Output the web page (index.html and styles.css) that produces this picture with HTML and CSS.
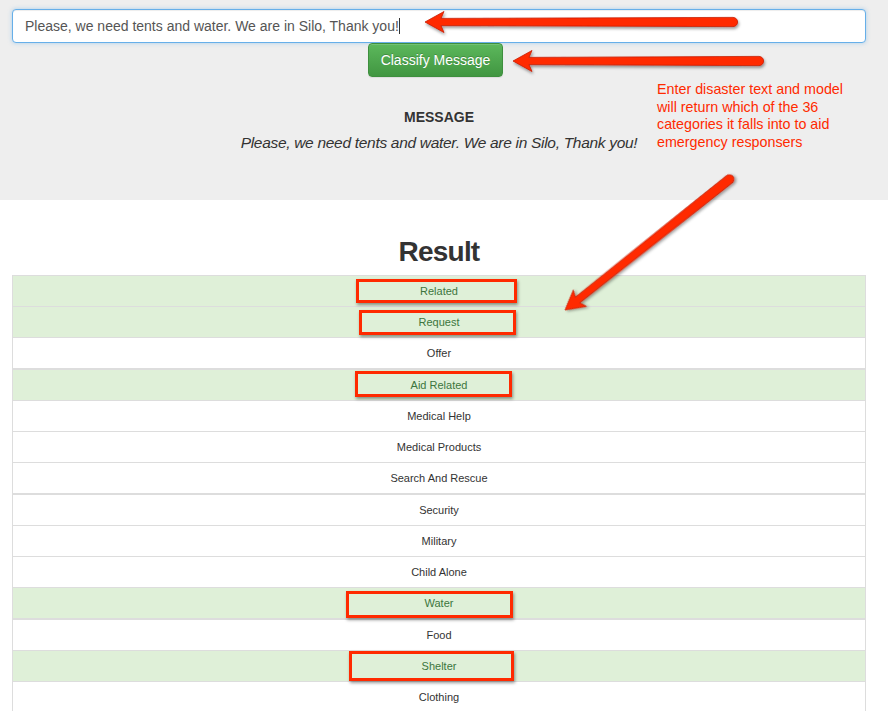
FILE: index.html
```html
<!DOCTYPE html>
<html>
<head>
<meta charset="utf-8">
<link rel="stylesheet" href="styles.css">
</head>
<body>
<div class="page">
  <section class="jumbotron">
    <div class="container">
      <form class="classify-form">
        <div class="input">Please, we need tents and water. We are in Silo, Thank you!<span class="caret"></span></div>
        <div class="btn-row"><button type="button" class="btn-success">Classify Message</button></div>
      </form>
      <div class="message">
        <h4 class="message-title">MESSAGE</h4>
        <p class="message-text">Please, we need tents and water. We are in Silo, Thank you!</p>
      </div>
    </div>
  </section>

  <section class="container results">
    <h2 class="result-title">Result</h2>
    <table class="table">
      <tbody>
        <tr class="success"><td>Related</td></tr>
        <tr class="success"><td>Request</td></tr>
        <tr><td>Offer</td></tr>
      </tbody>
      <tbody>
        <tr class="success"><td>Aid Related</td></tr>
        <tr><td>Medical Help</td></tr>
        <tr><td>Medical Products</td></tr>
        <tr><td>Search And Rescue</td></tr>
      </tbody>
      <tbody>
        <tr><td>Security</td></tr>
        <tr><td>Military</td></tr>
        <tr><td>Child Alone</td></tr>
        <tr class="success"><td>Water</td></tr>
      </tbody>
      <tbody>
        <tr><td>Food</td></tr>
        <tr class="success"><td>Shelter</td></tr>
        <tr><td>Clothing</td></tr>
      </tbody>
    </table>
  </section>

  <p class="note">Enter disaster text and model will return which of the 36 categories it falls into to aid emergency responsers</p>

  <div class="box box-related"></div>
  <div class="box box-request"></div>
  <div class="box box-aid"></div>
  <div class="box box-water"></div>
  <div class="box box-shelter"></div>

  <svg class="arrows" width="888" height="711" viewBox="0 0 888 711">
    <defs>
      <filter id="sh" x="-20%" y="-50%" width="140%" height="200%">
        <feDropShadow dx="1" dy="2" stdDeviation="1.6" flood-color="#000" flood-opacity="0.4"/>
      </filter>
    </defs>
    <g transform="translate(425,22)" filter="url(#sh)">
      <path class="arrow" d="M0,0 L19,-10.5 L16,-3.6 L308,-4.6 A4.6,4.6 0 0 1 308,4.6 L16,3.6 L19,10.5 Z"/>
    </g>
    <g transform="translate(513,61)" filter="url(#sh)">
      <path class="arrow" d="M0,0 L19,-10.5 L16,-3.6 L246,-4.6 A4.6,4.6 0 0 1 246,4.6 L16,3.6 L19,10.5 Z"/>
    </g>
    <g transform="translate(565,310) rotate(-38.5)" filter="url(#sh)">
      <path class="arrow" d="M0,0 L19,-10.5 L16,-3.6 L210,-4.6 A4.6,4.6 0 0 1 210,4.6 L16,3.6 L19,10.5 Z"/>
    </g>
  </svg>
</div>
</body>
</html>
```

FILE: styles.css
```css
* { box-sizing: border-box; }
html, body { margin: 0; padding: 0; background: #fff; }
body {
  font-family: "Liberation Sans", Arial, Helvetica, sans-serif;
  color: #333;
  width: 888px;
  height: 711px;
  overflow: hidden;
}
.page { position: relative; width: 888px; height: 711px; }

.jumbotron {
  background: #eeeeee;
  height: 200px;
  padding-top: 9px;
}
.container {
  margin-left: 12px;
  width: 854px;
}

.input {
  height: 34px;
  border: 1px solid #66afe9;
  border-radius: 4px;
  background: #fff;
  box-shadow: inset 0 1px 1px rgba(0,0,0,.075), 0 0 4px rgba(102,175,233,.5);
  padding: 0 12px;
  font-size: 14px;
  line-height: 32px;
  color: #555;
  white-space: nowrap;
}
.caret {
  display: inline-block;
  width: 1px;
  height: 16px;
  background: #333;
  vertical-align: -3px;
}

.btn-row {
  display: flex;
  justify-content: center;
  padding-right: 7px;
}
.btn-success {
  height: 34px;
  width: 135px;
  padding: 0;
  border: 1px solid #3e8f3e;
  border-radius: 4px;
  background: linear-gradient(to bottom, #5cb85c 0%, #419641 100%);
  box-shadow: inset 0 1px 0 rgba(255,255,255,.15), 0 1px 1px rgba(0,0,0,.075);
  color: #fff;
  font-family: "Liberation Sans", Arial, sans-serif;
  font-size: 14px;
  line-height: 32px;
  text-shadow: 0 -1px 0 rgba(0,0,0,.2);
}

.message { text-align: center; padding-top: 30px; }
.message-title {
  margin: 0;
  font-size: 14px;
  line-height: 20px;
  font-weight: bold;
  color: #333;
}
.message-text {
  margin: 5px 0 0;
  font-size: 15.5px;
  line-height: 22px;
  font-style: italic;
  color: #333;
  letter-spacing: -0.3px;
}

.results { padding-top: 35px; }
.result-title {
  margin: 0 0 6px;
  text-align: center;
  font-size: 28px;
  line-height: 34px;
  font-weight: bold;
  letter-spacing: -0.8px;
  color: #333;
}

.table {
  width: 854px;
  border-collapse: collapse;
  border: 1px solid #ddd;
  font-size: 11px;
}
.table td {
  height: 31px;
  padding: 0;
  border-top: 1px solid #ddd;
  text-align: center;
  vertical-align: middle;
  color: #333;
  background: #fff;
}
.table tbody + tbody { border-top: 2px solid #ddd; }
.table tbody + tbody tr:first-child td { border-top: 2px solid #ddd; height: 32px; }
.table tr.success td { background: #dff0d8; color: #3c763d; }

.note {
  position: absolute;
  left: 657px;
  top: 81px;
  width: 200px;
  margin: 0;
  font-size: 14.3px;
  line-height: 17.7px;
  color: #ff2a00;
}

.box {
  position: absolute;
  border: 3px solid #ff2a00;
  box-shadow: 1px 2px 3px rgba(0,0,0,.4);
}
.box-related { left: 356px; top: 279px; width: 161px; height: 24px; }
.box-request { left: 359px; top: 310px; width: 157px; height: 25px; }
.box-aid { left: 355px; top: 371px; width: 157px; height: 26px; }
.box-water { left: 346px; top: 591px; width: 167px; height: 27px; }
.box-shelter { left: 349px; top: 651px; width: 165px; height: 30px; }

.arrows { position: absolute; left: 0; top: 0; pointer-events: none; }
.arrow { fill: #ff2a00; stroke: #c81c00; stroke-width: 0.8; stroke-linejoin: round; }
```
